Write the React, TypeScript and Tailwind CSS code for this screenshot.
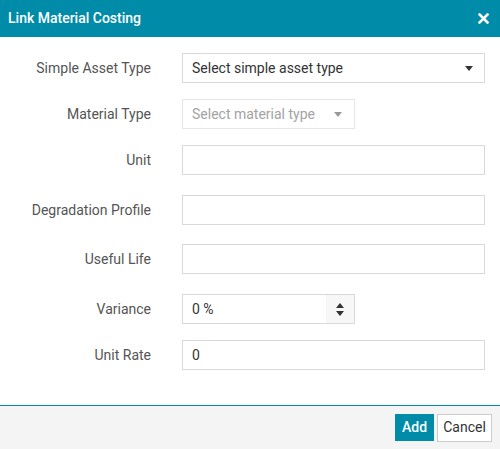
// App.tsx
// Link Material Costing dialog

const font = { fontFamily: 'Roboto, "Liberation Sans", sans-serif' }

function Caret({ className = '' }: { className?: string }) {
  return (
    <svg width="8" height="5" viewBox="0 0 8 5" className={className}>
      <path d="M0 0h8L4 5z" fill="currentColor" />
    </svg>
  )
}

function Row({ label, top, children }: { label: string; top: string; children: React.ReactNode }) {
  return (
    <div className={`flex items-center ${top}`}>
      <label className="w-[151px] shrink-0 text-right text-[14px] text-[#555]">{label}</label>
      <div className="ml-[31px] flex-1">{children}</div>
    </div>
  )
}

function TextBox({ value = '' }: { value?: string }) {
  return (
    <div className="flex h-[30px] w-[303px] items-center border border-[#d9d9d9] bg-white px-[9px] text-[14px] text-[#333]">
      {value}
    </div>
  )
}

export default function App() {
  return (
    <div style={font} className="flex h-[449px] w-[500px] flex-col bg-white">
      {/* HEADER */}
      <div className="flex h-[37px] shrink-0 items-center justify-between bg-[#008ca8] pl-[8px] pr-[11px]">
        <span className="text-[14px] font-medium text-white">Link Material Costing</span>
        <svg width="11" height="11" viewBox="0 0 11 11">
          <path d="M1.5 1.5l8 8M9.5 1.5l-8 8" stroke="white" strokeWidth="2.6" strokeLinecap="square" />
        </svg>
      </div>

      {/* BODY */}
      <div className="flex-1">
        <Row label="Simple Asset Type" top="mt-[16px]">
          <div className="flex h-[30px] w-[303px] items-center justify-between border border-[#d9d9d9] bg-white pl-[9px] pr-[11px] text-[14px] text-[#333]">
            <span>Select simple asset type</span>
            <Caret className="text-[#333]" />
          </div>
        </Row>

        <Row label="Material Type" top="mt-[16px]">
          <div className="flex h-[30px] w-[173px] items-center justify-between border border-[#e6e6e6] bg-white pl-[9px] pr-[12px] text-[14px] text-[#a3a3a3]">
            <span>Select material type</span>
            <Caret className="text-[#999]" />
          </div>
        </Row>

        <Row label="Unit" top="mt-[16px]">
          <TextBox />
        </Row>

        <Row label="Degradation Profile" top="mt-[20px]">
          <TextBox />
        </Row>

        <Row label="Useful Life" top="mt-[19px]">
          <TextBox />
        </Row>

        <Row label="Variance" top="mt-[20px]">
          <div className="flex h-[30px] w-[173px] border border-[#d9d9d9] bg-white text-[14px] text-[#333]">
            <span className="flex flex-1 items-center px-[9px]">0 %</span>
            <div className="flex w-[28px] flex-col items-center justify-center gap-[3px] bg-[#f7f7f7]">
              <svg width="8" height="5" viewBox="0 0 8 5">
                <path d="M0 5h8L4 0z" fill="#333" />
              </svg>
              <Caret className="text-[#333]" />
            </div>
          </div>
        </Row>

        <Row label="Unit Rate" top="mt-[16px]">
          <TextBox value="0" />
        </Row>
      </div>

      {/* FOOTER */}
      <div className="flex h-[44px] shrink-0 items-center justify-end gap-[3px] border-t-[1.5px] border-[#008ca8] bg-[#f4f4f4] pr-[8px]">
        <button className="h-[27px] w-[39px] bg-[#008ca8] text-[14px] font-medium text-white">Add</button>
        <button className="h-[28px] w-[55px] border border-[#cccccc] bg-white text-[14px] text-[#333]">Cancel</button>
      </div>
    </div>
  )
}
